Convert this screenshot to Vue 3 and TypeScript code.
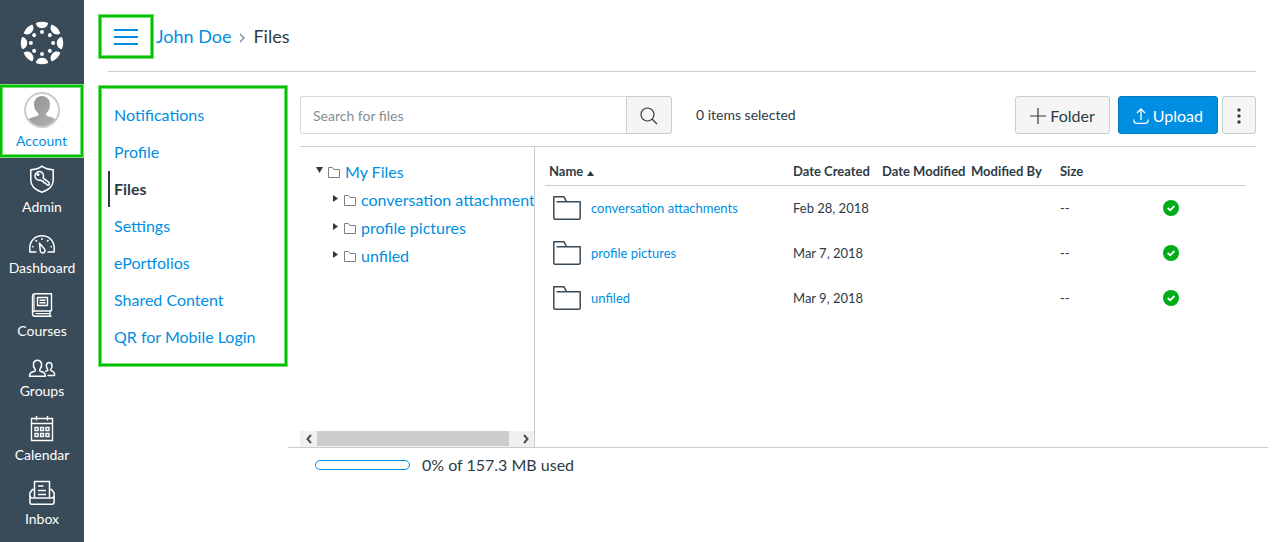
<script setup lang="ts">
import { ref } from 'vue'

interface FileRow {
  name: string
  created: string
  size: string
}

const query = ref('')

const sections: string[] = [
  'Notifications',
  'Profile',
  'Files',
  'Settings',
  'ePortfolios',
  'Shared Content',
  'QR for Mobile Login',
]
const activeSection = ref('Files')

const rows: FileRow[] = [
  { name: 'conversation attachments', created: 'Feb 28, 2018', size: '--' },
  { name: 'profile pictures', created: 'Mar 7, 2018', size: '--' },
  { name: 'unfiled', created: 'Mar 9, 2018', size: '--' },
]

const logoAngles: number[] = [0, 45, 90, 135, 180, 225, 270, 315]
</script>

<template>
  <div class="app">
    <nav class="global-nav" aria-label="Global navigation">
      <a class="logo" href="#" aria-label="Home">
        <svg width="44" height="44" viewBox="-22 -22 44 44" fill="#fff">
          <g v-for="a in logoAngles" :key="a" :transform="`rotate(${a})`">
            <path d="M-6.1 -19.9Q0 -22.6 6.1 -19.9C5.8 -17 3.4 -14.8 0 -14.8S-5.8 -17 -6.1 -19.9Z" />
            <circle cx="0" cy="-11.1" r="2" />
          </g>
        </svg>
      </a>

      <a class="nav-item current framed" href="#">
        <svg class="avatar" width="36" height="35" viewBox="0 0 36 35">
          <defs>
            <clipPath id="avatar-clip"><circle cx="18" cy="18" r="16.5" /></clipPath>
            <linearGradient id="avatar-fill" x1="0" y1="0" x2="1" y2="1">
              <stop offset="0" stop-color="#909090" />
              <stop offset="1" stop-color="#b4b4b4" />
            </linearGradient>
          </defs>
          <circle cx="18" cy="18" r="17" fill="#fff" />
          <path clip-path="url(#avatar-clip)" fill="url(#avatar-fill)" d="M18 4C23 4 26 8 26 12.5C26 16.500 24.500 19.500 22 21.500V23C24 25 29 25 32 27.500V36H4V27.500C7 25 12 25 14.500 23V21.500C12 19.500 10 16.500 10 12.500C10 8 13 4 18 4Z" />
          <circle cx="18" cy="18" r="17" fill="none" stroke="#c7cdd1" stroke-width="2" />
        </svg>
        <span>Account</span>
      </a>

      <a class="nav-item" href="#">
        <svg width="26" height="28" viewBox="0 0 26 28" fill="none" stroke="#fff" stroke-width="1.5" stroke-linejoin="round">
          <path d="M13 1.200C16 3.700 20 4.700 24.200 4.700V15C24.200 21 19 25.200 13 27.200C7 25.200 1.800 21 1.800 15V4.700C6 4.700 10 3.700 13 1.200Z" />
          <path d="M14.100 12.800A4.300 4.300 0 1 0 10.300 15.200L11.700 15L13 16.300L14.400 16.100L14.700 17.700L16.200 17.900L18.200 20.100L20.100 20V17.700Z" />
          <circle cx="9" cy="9.500" r=".8" />
        </svg>
        <span>Admin</span>
      </a>

      <a class="nav-item" href="#">
        <svg width="26" height="23" viewBox="0 0 26 23" fill="none" stroke="#fff" stroke-width="1.500" stroke-linejoin="round">
          <path d="M7.500 21H.8V17C.8 10 6 4.800 13 4.800S25.200 10 25.200 17V21H18.500" />
          <path d="M10.500 12.300L15.700 18.200C16.600 20 15.500 21.700 14 21.900C12.300 22.100 11 21 11.200 19.200Z" />
          <path d="M13 7V9M6.500 9L8 10.600M19.500 9L18 10.600M3 15.500L4.500 15.900M23 15.500L21.500 15.900" />
        </svg>
        <span>Dashboard</span>
      </a>

      <a class="nav-item" href="#">
        <svg width="22" height="25" viewBox="0 0 22 25" fill="none" stroke="#fff" stroke-width="1.400" stroke-linejoin="round">
          <path d="M20.500 19V1.700H4C2.500 1.700 1.500 2.700 1.500 4.200V21.700C1.500 23.200 2.500 24.200 4 24.200H20.500M20.500 19H4C2.500 19 1.500 20 1.500 21.500M19 19V24M4.500 21.600H19" />
          <path d="M3 3V18.500" stroke-opacity=".6" stroke-width="2" />
          <path d="M6.500 5.500H16.500V13.500H6.500ZM8.500 8.300H14.500M8.500 10.800H14.500" />
        </svg>
        <span>Courses</span>
      </a>

      <a class="nav-item" href="#">
        <svg width="28" height="22" viewBox="0 0 28 22" fill="none" stroke="#fff" stroke-width="1.500" stroke-linejoin="round">
          <path d="M1.500 21.300C1.500 17.500 3.500 17.300 6.500 16.300C7.500 15.900 7.600 15 7 14.100C4.200 10.500 5 5.200 9.500 5.200S14.800 10.500 12 14.100C11.400 15 11.500 15.900 12.500 16.300C15.500 17.300 17.300 17.500 17.300 21.300Z" />
          <path d="M17.200 16.500L19.300 15.600C20 15.200 20 14.800 19.500 14.100C17.300 11.300 18.300 7.500 21.200 7.500S25 11.300 22.900 14.100C22.400 14.800 22.400 15.200 23.100 15.600C25.600 16.600 26.600 17 26.600 20.500H19.500" />
        </svg>
        <span>Groups</span>
      </a>

      <a class="nav-item" href="#">
        <svg width="24" height="26" viewBox="0 0 24 26" fill="none" stroke="#fff" stroke-width="1.400">
          <path d="M1.500 3.500H22.500V25.500H1.500ZM1.500 8.500H22.500M6.500 1V5.500M17.500 1V5.500" />
          <path d="M5 12.500H8V15.500H5ZM10.500 12.500H13.500V15.500H10.500ZM16 12.500H19V15.500H16ZM5 18.500H8V21.500H5ZM10.500 18.500H13.500V21.500H10.500ZM16 18.500H19V21.500H16Z" />
        </svg>
        <span>Calendar</span>
      </a>

      <a class="nav-item" href="#">
        <svg width="26" height="26" viewBox="0 0 26 26" fill="none" stroke="#fff" stroke-width="1.500" stroke-linejoin="round">
          <path d="M5.500 18.500V2.500H20.500V18.500M9 7H14.500M9 11.500H17M9 15.500H17" />
          <path d="M5.500 10.500H3.500L.9 14V23C.9 24.500 1.700 25.300 3 25.300H23C24.300 25.300 25.100 24.500 25.100 23V14L22.500 10.500H20.500M.9 16.500C.9 18.500 2 19 3.500 19H22.500C24 19 25.100 18.500 25.100 16.500" />
        </svg>
        <span>Inbox</span>
      </a>
    </nav>

    <div class="page">
      <header class="page-header">
        <button class="menu-toggle framed" type="button" aria-label="Toggle account menu">
          <svg width="24" height="16" viewBox="0 0 24 16" stroke="#008ee2" stroke-width="2">
            <path d="M0 1H24M0 8H24M0 15H24" />
          </svg>
        </button>
        <nav class="breadcrumbs" aria-label="Breadcrumb">
          <a href="#">John Doe</a>
          <svg width="6" height="10" viewBox="0 0 6 10" fill="none" stroke="#73818c" stroke-width="1.200"><path d="M1 1L5 5L1 9" /></svg>
          <span>Files</span>
        </nav>
      </header>

      <div class="columns">
        <nav class="sections framed" aria-label="Account sections">
          <a
            v-for="s in sections"
            :key="s"
            href="#"
            :class="{ active: s === activeSection }"
            @click.prevent="activeSection = s"
          >{{ s }}</a>
        </nav>

        <main class="content">
          <div class="toolbar">
            <form class="search" role="search" @submit.prevent>
              <input v-model="query" type="text" placeholder="Search for files" aria-label="Search for files" />
              <button class="btn" type="submit" aria-label="Search">
                <svg width="18" height="18" viewBox="0 0 18 18" fill="none" stroke="#2d3b45" stroke-width="1.200">
                  <circle cx="7.500" cy="7.500" r="6.500" />
                  <path d="M12 12L17 17" />
                </svg>
              </button>
            </form>
            <span class="selected-count">0 items selected</span>
            <div class="actions">
              <button class="btn add-folder" type="button">
                <svg width="16" height="16" viewBox="0 0 16 16" stroke="#2d3b45" stroke-width="1.200"><path d="M8 0V16M0 8H16" /></svg>
                Folder
              </button>
              <button class="btn upload" type="button">
                <svg width="16" height="16" viewBox="0 0 16 16" fill="none" stroke="#fff" stroke-width="1.300"><path d="M8 12V1M4 5L8 1L12 5M.7 11.500C.7 14.500 2 15.300 4 15.300H12C14 15.300 15.300 14.500 15.300 11.500" /></svg>
                Upload
              </button>
              <button class="btn more" type="button" aria-label="More options">
                <svg width="4" height="16" viewBox="0 0 4 16" fill="#2d3b45"><circle cx="2" cy="2" r="1.700" /><circle cx="2" cy="8" r="1.700" /><circle cx="2" cy="14" r="1.700" /></svg>
              </button>
            </div>
          </div>

          <div class="panes">
            <aside class="tree-pane">
              <ul class="tree">
                <li>
                  <a href="#">
                    <svg class="caret" width="7" height="10" viewBox="0 0 7 10" fill="#2d3b45"><path d="M0 0H7L3.500 6Z" /></svg>
                    <svg class="mini-folder" width="12" height="11" viewBox="0 0 12 11" fill="none" stroke="#837c80"><path d="M.5 10.500V.5H4.500L6 2.500H11.500V10.500Z" /></svg>
                    My Files
                  </a>
                  <ul>
                    <li v-for="r in rows" :key="r.name">
                      <a href="#">
                        <svg class="caret" width="7" height="10" viewBox="0 0 7 10" fill="#2d3b45"><path d="M1 0L6 3.500L1 7Z" /></svg>
                        <svg class="mini-folder" width="12" height="11" viewBox="0 0 12 11" fill="none" stroke="#837c80"><path d="M.5 10.500V.5H4.500L6 2.500H11.500V10.500Z" /></svg>
                        {{ r.name }}
                      </a>
                    </li>
                  </ul>
                </li>
              </ul>
              <div class="scrollbar">
                <button type="button" aria-label="Scroll left">
                  <svg width="6" height="8" viewBox="0 0 6 8" fill="none" stroke="#505050" stroke-width="2"><path d="M5 0L1.500 4L5 8" /></svg>
                </button>
                <div class="track"><div class="thumb"></div></div>
                <button type="button" aria-label="Scroll right">
                  <svg width="6" height="8" viewBox="0 0 6 8" fill="none" stroke="#505050" stroke-width="2"><path d="M1 0L4.500 4L1 8" /></svg>
                </button>
              </div>
            </aside>

            <div class="list-pane">
              <table>
                <colgroup>
                  <col />
                  <col class="col-meta" />
                  <col class="col-meta" />
                  <col class="col-meta" />
                  <col class="col-size" />
                  <col class="col-status" />
                </colgroup>
                <thead>
                  <tr>
                    <th class="name-head" scope="col">
                      Name
                      <svg width="7" height="5" viewBox="0 0 7 5" fill="#2d3b45"><path d="M0 5H7L3.500 0Z" /></svg>
                    </th>
                    <th scope="col">Date Created</th>
                    <th scope="col">Date Modified</th>
                    <th scope="col">Modified By</th>
                    <th scope="col">Size</th>
                    <td></td>
                  </tr>
                </thead>
                <tbody>
                  <tr v-for="r in rows" :key="r.name">
                    <td>
                      <a class="file" href="#">
                        <svg width="28" height="24" viewBox="0 0 28 24" fill="none" stroke="#394b58" stroke-width="1.500" stroke-linejoin="round">
                          <path d="M3.500 5.700H27.200V22C27.200 22.800 26.800 23.200 26 23.200H2C1.200 23.200.8 22.800.8 22V.8H11L13.500 5.700" />
                        </svg>
                        {{ r.name }}
                      </a>
                    </td>
                    <td>{{ r.created }}</td>
                    <td></td>
                    <td></td>
                    <td>{{ r.size }}</td>
                    <td>
                      <button class="status" type="button" aria-label="Published">
                        <svg width="16" height="16" viewBox="0 0 16 16"><circle cx="8" cy="8" r="8" fill="#00ac18" /><path d="M4.700 8L7.200 10.300L11.400 6" fill="none" stroke="#fff" stroke-width="1.800" /></svg>
                      </button>
                    </td>
                  </tr>
                </tbody>
              </table>
            </div>
          </div>

          <footer class="quota">
            <div class="meter" role="progressbar" aria-label="Storage used" aria-valuenow="0" aria-valuemin="0" aria-valuemax="100"></div>
            <span>0% of 157.3 MB used</span>
          </footer>
        </main>
      </div>
    </div>
  </div>
</template>

<style>
body {
  background: #fff;
}
</style>

<style scoped>
.app {
  display: flex;
  min-height: 100vh;
  font-family: Lato, 'Liberation Sans', sans-serif;
  font-size: 16px;
  line-height: 20px;
  color: #2d3b45;
}
.app *,
.app *::before {
  box-sizing: border-box;
}
a {
  color: #008ee2;
  text-decoration: none;
}
svg {
  display: block;
  flex: none;
  overflow: visible;
}
button,
input {
  font: inherit;
  color: inherit;
  margin: 0;
}
.framed {
  border: 1px solid #76df76;
  box-shadow: inset 0 0 0 2px #00c000, inset 0 0 0 3px #76df76;
}

.global-nav {
  flex: none;
  width: 84px;
  background: #394b58;
}
.logo {
  display: flex;
  align-items: center;
  justify-content: center;
  height: 84px;
  padding-top: 2px;
}
.nav-item {
  display: flex;
  flex-direction: column;
  align-items: center;
  gap: 4px;
  padding: 7px 0;
  font-size: 14px;
  color: #fff;
}
.nav-item.current {
  padding: 7px 0 6px;
  border-left: 0;
  background: #fff;
  color: #008ee2;
}

.page {
  flex: 1;
  min-width: 0;
  padding: 0 12px 0 14px;
}
.page-header {
  display: flex;
  align-items: flex-start;
  gap: 2px;
  padding: 14px 0 13px;
  margin: 0 12px 0 0;
  position: relative;
}
.page-header::after {
  content: '';
  position: absolute;
  left: 10px;
  right: 0;
  bottom: 0;
  border-bottom: 1px solid #c7cdd1;
}
.menu-toggle {
  display: flex;
  align-items: center;
  justify-content: center;
  width: 56px;
  height: 45px;
  padding: 0;
  background: #fff;
}
.breadcrumbs {
  display: flex;
  align-items: center;
  gap: 8px;
  font-size: 18px;
  line-height: 44px;
}
.breadcrumbs svg {
  margin-top: 4px;
}

.columns {
  display: flex;
  align-items: flex-start;
  padding-top: 13px;
}
.sections {
  flex: none;
  display: flex;
  flex-direction: column;
  gap: 1px;
  width: 190px;
  padding: 11px 9px;
}
.sections a {
  padding-left: 4px;
  border-left: 2px solid transparent;
  line-height: 36px;
}
.sections a.active {
  border-color: #2d3b45;
  color: #2d3b45;
  font-weight: 700;
}

.content {
  flex: 1;
  min-width: 0;
}
.toolbar {
  display: flex;
  align-items: center;
  margin: 0 12px;
  padding: 11px 0 12px;
  border-bottom: 1px solid #c7cdd1;
}
.search {
  display: flex;
  flex: 0 1 372px;
}
.search input {
  flex: 1;
  min-width: 0;
  height: 38px;
  padding: 0 12px;
  border: 1px solid #d6dbe1;
  border-right: 0;
  border-radius: 3px 0 0 3px;
  background: #fff;
  font-size: 14px;
}
.search input::placeholder {
  color: #868e94;
  opacity: 1;
}
.btn {
  display: flex;
  align-items: center;
  justify-content: center;
  gap: 4px;
  height: 38px;
  padding: 1px 14px 0;
  border: 1px solid #c7cdd1;
  border-radius: 3px;
  background: #f5f5f5;
  white-space: nowrap;
}
.search .btn {
  width: 46px;
  border-radius: 0 3px 3px 0;
}
.selected-count {
  margin-left: 24px;
  font-size: 14px;
}
.actions {
  display: flex;
  margin-left: auto;
}
.btn.upload {
  margin: 0 4px 0 8px;
  border-color: #0079c1;
  background: #008ee2;
  color: #fff;
}

.panes {
  display: flex;
  min-height: 300px;
  margin: 0 12px;
}
.tree-pane {
  flex: none;
  display: flex;
  flex-direction: column;
  justify-content: space-between;
  width: 235px;
  padding-top: 11px;
  border-right: 1px solid #c7cdd1;
  overflow: hidden;
}
.tree,
.tree ul {
  margin: 0;
  padding: 0 0 0 16px;
  list-style: none;
}
.tree a {
  display: flex;
  align-items: center;
  line-height: 28px;
  white-space: nowrap;
}
.caret {
  margin-right: 5px;
}
.mini-folder {
  margin-right: 5px;
}
.scrollbar {
  display: flex;
  height: 16px;
  background: #f0f0f0;
}
.scrollbar button {
  display: flex;
  align-items: center;
  justify-content: center;
  width: 17px;
  padding: 0;
  border: 0;
  background: none;
}
.track {
  flex: 1;
}
.thumb {
  width: 96%;
  height: 15px;
  background: #cdcdcd;
}

.list-pane {
  flex: 1;
  min-width: 0;
  padding: 10px 10px 0;
}
table {
  width: 100%;
  table-layout: fixed;
  border-collapse: collapse;
  font-size: 13px;
}
.col-meta {
  width: 89px;
}
.col-size {
  width: 103px;
}
.col-status {
  width: 83px;
}
th,
td {
  padding: 0;
  text-align: left;
  white-space: nowrap;
}
thead tr {
  height: 28px;
  border-bottom: 1px solid #c7cdd1;
}
.name-head {
  padding-left: 4px;
}
.name-head svg {
  display: inline-block;
  margin-left: 1px;
}
tbody tr {
  height: 45px;
}
.file {
  display: flex;
  align-items: center;
  gap: 10px;
  padding-left: 8px;
}
.status {
  display: block;
  padding: 0;
  border: 0;
  background: none;
}

.quota {
  display: flex;
  align-items: center;
  gap: 12px;
  padding: 7px 27px;
  border-top: 1px solid #c7cdd1;
}
.meter {
  width: 95px;
  height: 10px;
  border: 1px solid #008ee2;
  border-radius: 5px;
}
</style>
